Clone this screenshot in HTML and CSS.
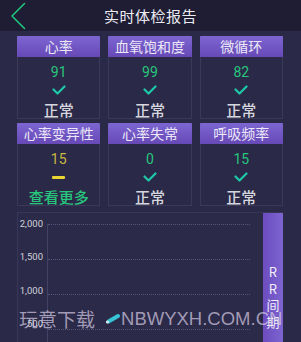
FILE: index.html
```html
<!DOCTYPE html>
<html lang="zh">
<head>
<meta charset="utf-8">
<link rel="stylesheet" href="styles.css">
</head>
<body>
<div class="screen">
  <header class="topbar">
    <div class="back">
      <svg width="16" height="28" viewBox="0 0 16 28"><path d="M14.5 1.5 L2 14 L14.5 26.5" fill="none" stroke="#21c77e" stroke-width="1.5" stroke-linecap="round" stroke-linejoin="round"/></svg>
    </div>
    <div class="title">实时体检报告</div>
    <div></div>
  </header>

  <main class="content">
    <section class="cards">
      <div class="card">
        <div class="card-head">心率</div>
        <div class="card-body">
          <div class="value green">91</div>
          <div class="mark"><svg width="14" height="10" viewBox="0 0 14 10"><path d="M1.5 4.5 L5.5 8.5 L12.5 1.5" fill="none" stroke="#1ec9a8" stroke-width="2.2" stroke-linecap="round" stroke-linejoin="round"/></svg></div>
          <div class="status">正常</div>
        </div>
      </div>
      <div class="card">
        <div class="card-head">血氧饱和度</div>
        <div class="card-body">
          <div class="value green">99</div>
          <div class="mark"><svg width="14" height="10" viewBox="0 0 14 10"><path d="M1.5 4.5 L5.5 8.5 L12.5 1.5" fill="none" stroke="#1ec9a8" stroke-width="2.2" stroke-linecap="round" stroke-linejoin="round"/></svg></div>
          <div class="status">正常</div>
        </div>
      </div>
      <div class="card">
        <div class="card-head">微循环</div>
        <div class="card-body">
          <div class="value green">82</div>
          <div class="mark"><svg width="14" height="10" viewBox="0 0 14 10"><path d="M1.5 4.5 L5.5 8.5 L12.5 1.5" fill="none" stroke="#1ec9a8" stroke-width="2.2" stroke-linecap="round" stroke-linejoin="round"/></svg></div>
          <div class="status">正常</div>
        </div>
      </div>
      <div class="card">
        <div class="card-head">心率变异性</div>
        <div class="card-body">
          <div class="value yellow">15</div>
          <div class="mark"><span class="dash"></span></div>
          <div class="status more">查看更多</div>
        </div>
      </div>
      <div class="card">
        <div class="card-head">心率失常</div>
        <div class="card-body">
          <div class="value green">0</div>
          <div class="mark"><svg width="14" height="10" viewBox="0 0 14 10"><path d="M1.5 4.5 L5.5 8.5 L12.5 1.5" fill="none" stroke="#1ec9a8" stroke-width="2.2" stroke-linecap="round" stroke-linejoin="round"/></svg></div>
          <div class="status">正常</div>
        </div>
      </div>
      <div class="card">
        <div class="card-head">呼吸频率</div>
        <div class="card-body">
          <div class="value green">15</div>
          <div class="mark"><svg width="14" height="10" viewBox="0 0 14 10"><path d="M1.5 4.5 L5.5 8.5 L12.5 1.5" fill="none" stroke="#1ec9a8" stroke-width="2.2" stroke-linecap="round" stroke-linejoin="round"/></svg></div>
          <div class="status">正常</div>
        </div>
      </div>
    </section>

    <section class="chart">
      <div class="axis-labels">
        <div class="label">2,000</div>
        <div class="label">1,500</div>
        <div class="label">1,000</div>
        <div class="label">500</div>
      </div>
      <div class="plot">
        <div class="gridline"></div>
        <div class="gridline"></div>
        <div class="gridline"></div>
        <div class="gridline"></div>
      </div>
      <div class="side-tab">
        <span>R</span><span>R</span><span>间</span><span>期</span>
      </div>
    </section>
  </main>

  <div class="watermark">
    <span class="wm-cn">玩意下载</span>
    <svg class="wm-icon" width="16" height="12" viewBox="0 0 16 12"><path d="M3.5 8.5 L13 3" stroke="#36c4d6" stroke-width="4" stroke-linecap="round"/><circle cx="2.5" cy="9" r="1.6" fill="#d8e8f0"/></svg>
    <span class="wm-en">NBWYXH.COM.CN</span>
  </div>
</div>
</body>
</html>
```

FILE: styles.css
```css
* { box-sizing: border-box; }
html, body {
  margin: 0;
  padding: 0;
}
body {
  width: 301px;
  height: 342px;
  overflow: hidden;
  background: #29284a;
  font-family: "Noto Sans CJK SC", "Noto Sans", sans-serif;
}
.screen {
  position: relative;
  width: 301px;
  height: 342px;
  overflow: hidden;
  background: #2a2947;
}
.topbar {
  height: 31px;
  background: #1e1d34;
  display: grid;
  grid-template-columns: 1fr auto 1fr;
  align-items: center;
}
.back {
  padding-left: 10px;
  display: flex;
  align-items: center;
  height: 28px;
}
.title {
  color: #ecebf2;
  font-size: 15px;
  line-height: 31px;
  letter-spacing: 0.5px;
}
.content {
  padding: 5px 18px 0 17px;
}
.cards {
  display: grid;
  grid-template-columns: repeat(3, 1fr);
  column-gap: 8px;
  row-gap: 4px;
}
.card {
  height: 83px;
  display: flex;
  flex-direction: column;
  border: 1px solid #3a3958;
  border-top: none;
  background: #2a2947;
}
.card-head {
  height: 21px;
  margin: 0 -1px;
  background: linear-gradient(#7d66d2, #6749b6);
  color: #ece8f8;
  font-size: 14px;
  line-height: 21px;
  text-align: center;
  border-radius: 1px 1px 0 0;
}
.card-body {
  display: flex;
  flex-direction: column;
  align-items: center;
  padding-top: 7px;
}
.value {
  font-family: Roboto, "Noto Sans", sans-serif;
  font-size: 14px;
  line-height: 17px;
  height: 17px;
}
.green { color: #27c67c; }
.yellow { color: #cbb743; }
.mark {
  height: 14px;
  display: flex;
  align-items: center;
  justify-content: center;
  margin-top: 2px;
}
.dash {
  width: 13px;
  height: 3px;
  background: #e9d531;
  border-radius: 1px;
}
.status {
  margin-top: 3px;
  font-size: 15px;
  line-height: 19px;
  color: #d6d6df;
  font-weight: 500;
}
.status.more {
  color: #27c67c;
}
.chart {
  margin-top: 6px;
  height: 140px;
  display: flex;
  border: 1px solid #38375a;
  border-right: none;
  background: #2b2a48;
}
.axis-labels {
  width: 29px;
  padding-top: 5px;
  padding-right: 4px;
  display: flex;
  flex-direction: column;
  align-items: flex-end;
}
.label {
  height: 35px;
  line-height: 12px;
  font-family: Roboto, "Noto Sans", sans-serif;
  font-size: 9.5px;
  color: #d2d2dc;
}
.plot {
  flex: 1;
  margin-top: 11px;
  margin-right: 13px;
  border-left: 1px solid #434264;
  display: flex;
  flex-direction: column;
}
.gridline {
  height: 35px;
  border-top: 1px dotted #55547a;
  flex: none;
}
.side-tab {
  width: 20px;
  background: linear-gradient(90deg, #6d4cc0, #7c64cf);
  display: flex;
  flex-direction: column;
  align-items: center;
  padding-top: 51px;
  color: #f1eefb;
  font-size: 13px;
  line-height: 16.5px;
}
.watermark {
  position: absolute;
  left: 19px;
  top: 305px;
  display: flex;
  align-items: center;
  color: rgba(210, 200, 224, 0.72);
  font-size: 19px;
  line-height: 28px;
  white-space: nowrap;
}
.wm-cn {
  font-family: "Noto Sans CJK SC", sans-serif;
}
.wm-icon {
  margin-left: 10px;
  margin-right: 0;
}
.wm-en {
  font-family: "Liberation Sans", Arial, sans-serif;
  font-size: 18.5px;
}
```
